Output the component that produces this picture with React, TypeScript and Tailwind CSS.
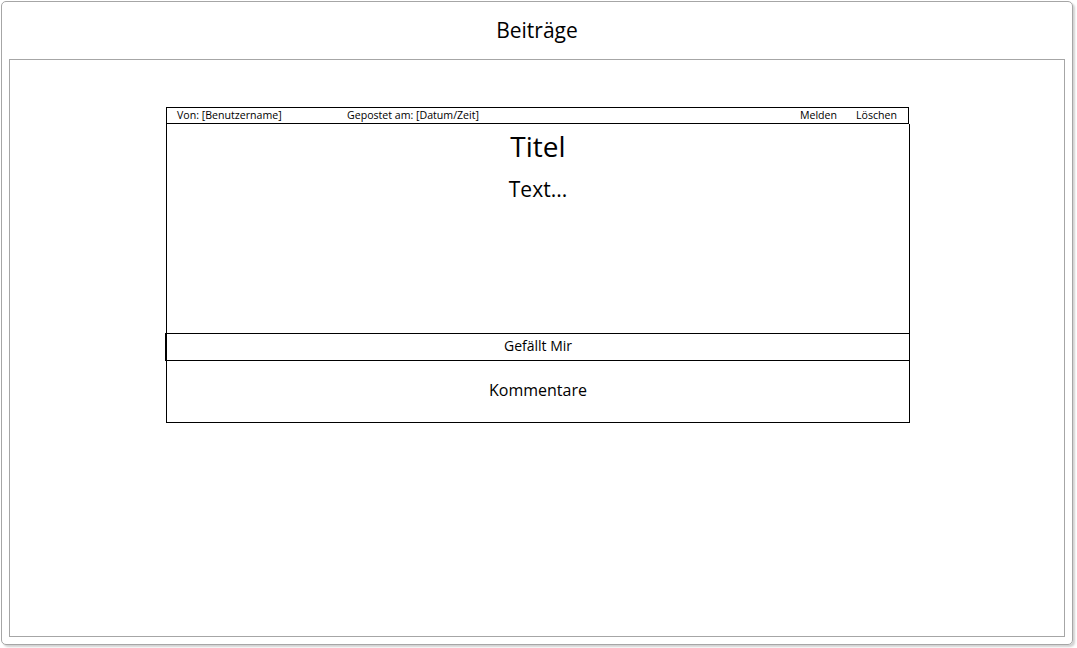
import React from "react";

const font = { fontFamily: '"Open Sans", "Noto Sans", sans-serif' };

/** Single post wireframe card */
function PostCard() {
  return (
    <div className="ml-[156px] w-[744px] text-black">
      {/* Meta bar */}
      <div className="flex items-start w-[743px] h-[17px] border border-black pl-[10px] pr-[11px] pt-[1px] text-[10.6px] leading-[12px]">
        <span className="w-[170px]">Von: [Benutzername]</span>
        <span>Gepostet am: [Datum/Zeit]</span>
        <div className="ml-auto flex gap-[19px]">
          <span>Melden</span>
          <span>Löschen</span>
        </div>
      </div>

      {/* Body */}
      <div className="border-x border-b border-black">
        <div className="h-[209px] flex flex-col items-center">
          <h2 className="mt-[5px] text-[28px] leading-[34px]">Titel</h2>
          <p className="mt-[13px] text-[21px] leading-[26px]">Text...</p>
        </div>
        <div className="-ml-[2px] h-[28px] border-y border-l-2 border-black flex items-center justify-center text-[14px] pb-[3px]">
          Gefällt Mir
        </div>
        <div className="h-[61px] flex items-center justify-center text-[16px] pb-[3px]">
          Kommentare
        </div>
      </div>
    </div>
  );
}

export default function App() {
  return (
    <div className="w-[1077px] h-[648px] bg-white p-px" style={font}>
      <div className="w-[1072px] h-[644px] border border-[#a6a6a6] rounded-[5px] shadow-[2px_2px_2px_rgba(0,0,0,0.18)] flex flex-col">
        <header className="h-[57px] flex items-center justify-center text-[21px] text-black">
          Beiträge
        </header>
        <div className="mx-[7px] mb-[7px] flex-1 border border-[#a6a6a6] pt-[47px]">
          <PostCard />
        </div>
      </div>
    </div>
  );
}
